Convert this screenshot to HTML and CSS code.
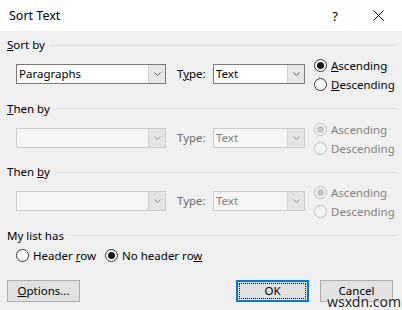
FILE: index.html
```html
<!DOCTYPE html>
<html lang="en">
<head>
  <meta charset="UTF-8" />
  <title>Sort Text</title>
  <link rel="stylesheet" href="styles.css">
</head>
<body>
  <div class="dialog">
    <div class="titlebar">
      <span class="title">Sort Text</span>
      <span class="help">?</span>
      <span class="close">
        <svg width="11" height="11" viewBox="0 0 11 11"><path d="M0.5 0.5L10.5 10.5M10.5 0.5L0.5 10.5" stroke="#000" stroke-width="1" fill="none"/></svg>
      </span>
    </div>

    <div class="content">
      <div class="group">
        <div class="group-head"><span><u>S</u>ort by</span></div>
        <div class="row">
          <div class="combo combo-field">
            <span class="value">Paragraphs</span>
            <span class="arrow"><svg width="7" height="4" viewBox="0 0 7 4"><path d="M0.5 0.5L3.5 3.5L6.5 0.5" stroke="#5a5a5a" fill="none"/></svg></span>
          </div>
          <span class="type-label">T<u>y</u>pe:</span>
          <div class="combo combo-type">
            <span class="value">Text</span>
            <span class="arrow"><svg width="7" height="4" viewBox="0 0 7 4"><path d="M0.5 0.5L3.5 3.5L6.5 0.5" stroke="#5a5a5a" fill="none"/></svg></span>
          </div>
          <div class="radios">
            <label class="radio checked"><span class="circle"></span><span><u>A</u>scending</span></label>
            <label class="radio"><span class="circle"></span><span><u>D</u>escending</span></label>
          </div>
        </div>
      </div>

      <div class="group">
        <div class="group-head"><span><u>T</u>hen by</span></div>
        <div class="row disabled">
          <div class="combo combo-field">
            <span class="value"></span>
            <span class="arrow"><svg width="7" height="4" viewBox="0 0 7 4"><path d="M0.5 0.5L3.5 3.5L6.5 0.5" stroke="#5a5a5a" fill="none"/></svg></span>
          </div>
          <span class="type-label">Type:</span>
          <div class="combo combo-type">
            <span class="value">Text</span>
            <span class="arrow"><svg width="7" height="4" viewBox="0 0 7 4"><path d="M0.5 0.5L3.5 3.5L6.5 0.5" stroke="#5a5a5a" fill="none"/></svg></span>
          </div>
          <div class="radios">
            <label class="radio checked"><span class="circle"></span><span>Ascending</span></label>
            <label class="radio"><span class="circle"></span><span>Descending</span></label>
          </div>
        </div>
      </div>

      <div class="group">
        <div class="group-head"><span>Then <u>b</u>y</span></div>
        <div class="row disabled">
          <div class="combo combo-field">
            <span class="value"></span>
            <span class="arrow"><svg width="7" height="4" viewBox="0 0 7 4"><path d="M0.5 0.5L3.5 3.5L6.5 0.5" stroke="#5a5a5a" fill="none"/></svg></span>
          </div>
          <span class="type-label">Type:</span>
          <div class="combo combo-type">
            <span class="value">Text</span>
            <span class="arrow"><svg width="7" height="4" viewBox="0 0 7 4"><path d="M0.5 0.5L3.5 3.5L6.5 0.5" stroke="#5a5a5a" fill="none"/></svg></span>
          </div>
          <div class="radios">
            <label class="radio checked"><span class="circle"></span><span>Ascending</span></label>
            <label class="radio"><span class="circle"></span><span>Descending</span></label>
          </div>
        </div>
      </div>

      <div class="group-head"><span>My list has</span></div>
      <div class="list-row">
        <label class="radio"><span class="circle"></span><span>Header <u>r</u>ow</span></label>
        <label class="radio checked"><span class="circle"></span><span>No header ro<u>w</u></span></label>
      </div>

      <div class="buttons">
        <button class="btn"><u>O</u>ptions...</button>
        <span class="spacer"></span>
        <button class="btn btn-default"><span class="focus">OK</span></button>
        <button class="btn">Cancel</button>
      </div>
    </div>
    <span class="watermark">wsxdn.com</span>
  </div>
</body>
</html>
```

FILE: styles.css
```css
* {
  box-sizing: border-box;
}

body {
  margin: 0;
  font-family: "Noto Sans", "Open Sans", sans-serif;
  font-size: 11.5px;
  color: #000;
  background: #f0f0f0;
}

.dialog {
  position: relative;
  width: 402px;
  height: 310px;
  background: #f0f0f0;
  overflow: hidden;
}

.titlebar {
  height: 31px;
  background: #fff;
  display: flex;
  align-items: center;
}

.title {
  flex: 1;
  padding-left: 9px;
  font-size: 12.5px;
}

.help {
  width: 30px;
  text-align: center;
  margin-right: 6px;
  font-size: 13px;
}

.close {
  width: 46px;
  height: 31px;
  display: flex;
  align-items: center;
  justify-content: center;
  padding-right: 2px;
}

.close svg {
  display: block;
}

.content {
  padding: 6px 6px 0 7px;
}

.group {
  margin-bottom: 6.5px;
}

.group-head {
  height: 16px;
  line-height: 16px;
  display: flex;
  align-items: center;
}

.group-head::after {
  content: "";
  flex: 1;
  height: 1px;
  background: #dcdcdc;
  margin-left: 6px;
}

.row {
  margin-top: 3px;
  height: 38px;
  display: flex;
  align-items: flex-start;
  padding-left: 9px;
}

.combo {
  margin-top: 8px;
  height: 20px;
  display: flex;
  align-items: stretch;
  background: #fff;
  border: 1px solid #7a7a7a;
}

.combo .value {
  flex: 1;
  padding-left: 2px;
  line-height: 18px;
  white-space: nowrap;
}

.combo .arrow {
  width: 17px;
  display: flex;
  align-items: center;
  justify-content: center;
  background: #e6e6e6;
  border-left: 1px solid #cfcfcf;
}

.combo .arrow svg {
  display: block;
}

.combo-field {
  width: 150px;
}

.combo-type {
  width: 92px;
}

.type-label {
  margin-top: 8px;
  margin-left: 11px;
  width: 36px;
  line-height: 20px;
}

.radios {
  margin-left: 9px;
  display: flex;
  flex-direction: column;
}

.radio {
  height: 19px;
  display: flex;
  align-items: center;
  white-space: nowrap;
}

.radio .circle {
  width: 13px;
  height: 13px;
  border: 1px solid #333;
  border-radius: 50%;
  background: #fff;
  margin-right: 4px;
  display: flex;
  align-items: center;
  justify-content: center;
}

.radio.checked .circle::after {
  content: "";
  width: 7px;
  height: 7px;
  border-radius: 50%;
  background: #1a1a1a;
}

.disabled {
  color: #838383;
}

.disabled .type-label {
  color: #6d6d6d;
}

.disabled .combo {
  background: #f5f5f5;
  border-color: #cccccc;
}

.disabled .combo .arrow {
  background: #e4e4e4;
  border-left-color: #d4d4d4;
}

.disabled .combo .arrow path {
  stroke: #8a8a8a;
}

.disabled .radio .circle {
  border-color: #bcbcbc;
  background: #f4f4f4;
}

.disabled .radio.checked .circle::after {
  background: #c4c4c4;
}

.list-row {
  margin-top: 2.5px;
  display: flex;
  gap: 9px;
  padding-left: 9px;
}

.buttons {
  margin-top: 14.5px;
  display: flex;
  padding-right: 3px;
}

.spacer {
  flex: 1;
}

.btn {
  width: 73px;
  height: 22px;
  padding: 0;
  font-family: inherit;
  font-size: 11.5px;
  color: #000;
  background: #e1e1e1;
  border: 1px solid #adadad;
  margin-left: 11px;
}

.btn:first-child {
  margin-left: 0;
}

.btn-default {
  border: 2px solid #0078d7;
  display: flex;
  padding: 1px;
}

.btn-default .focus {
  flex: 1;
  border: 1px dotted #000;
  line-height: 14px;
}

.watermark {
  position: absolute;
  left: 327px;
  top: 292px;
  font-size: 14px;
  color: #222;
  text-shadow: 0 0 2px #fff, 0 0 2px #fff, 0 0 2px #fff;
}
```
